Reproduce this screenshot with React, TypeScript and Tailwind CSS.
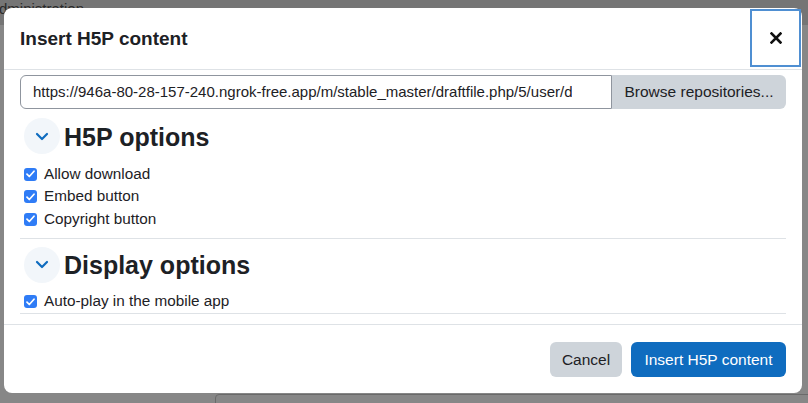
import React from "react";

const font = { fontFamily: '"Liberation Sans", Arial, sans-serif' };

function Chevron() {
  return (
    <span className="flex h-[36px] w-[36px] shrink-0 items-center justify-center rounded-full bg-[#f2f6fa]">
      <svg width="14" height="9" viewBox="0 0 14 9" fill="none">
        <path d="M2 2l5 5 5-5" stroke="#0f6cbf" strokeWidth="2.2" strokeLinecap="round" strokeLinejoin="round" />
      </svg>
    </span>
  );
}

function Check({ label }: { label: string }) {
  return (
    <label className="flex h-[22.5px] items-center gap-[7px] pl-[4px] text-[15.3px] text-[#1d2125]">
      <span className="flex h-[13px] w-[13px] items-center justify-center rounded-[3px] bg-[#2f7cf6]">
        <svg width="9" height="8" viewBox="0 0 9 8" fill="none">
          <path d="M1 4.2l2.3 2.3L8 1.2" stroke="white" strokeWidth="1.7" strokeLinecap="round" strokeLinejoin="round" />
        </svg>
      </span>
      {label}
    </label>
  );
}

function Section({ title }: { title: string }) {
  return (
    <div className="flex items-center gap-[4px] pl-[4px]">
      <Chevron />
      <h3 className="pt-[2px] text-[25px] font-bold leading-none text-[#1d2125]">{title}</h3>
    </div>
  );
}

export default function App() {
  return (
    <div className="relative h-[403px] w-[808px] overflow-hidden bg-[#878787]" style={font}>
      <div className="absolute inset-x-0 top-0 h-[25px] bg-[#757575]" />
      <div className="absolute -left-[11px] -top-[2px] text-[15px] text-[#2a2a2a]">Administration</div>
      <div className="absolute left-[215px] top-[394px] h-[30px] w-[600px] rounded-tl-[4px] border border-[#6a6a6a]" />

      <div className="relative ml-[4px] mt-[8px] flex h-[385px] w-[798px] flex-col rounded-[8px] bg-white">
        <div className="flex h-[62px] items-center justify-between border-b border-[#dee2e6] pl-[16px] pr-[1px]">
          <h5 className="pt-[2px] text-[19px] font-bold text-[#1d2125]">Insert H5P content</h5>
          <button className="mb-[1px] flex h-[58px] w-[51px] items-center justify-center border-2 border-[#4f8fd2]">
            <svg width="12" height="12" viewBox="0 0 12 12">
              <path d="M1.5 1.5l9 9M10.5 1.5l-9 9" stroke="#111" strokeWidth="2.6" strokeLinecap="square" />
            </svg>
          </button>
        </div>

        <div className="flex flex-col px-[16px] pb-[10px] pt-[5px]">
          <div className="flex h-[34px]">
            <div className="flex min-w-0 flex-1 items-center overflow-hidden whitespace-nowrap rounded-l-[6px] border border-[#8f959e] pl-[12px] text-[15px] text-[#1d2125]">
              <span className="truncate [text-overflow:clip]">
                https://946a-80-28-157-240.ngrok-free.app/m/stable_master/draftfile.php/5/user/d
              </span>
            </div>
            <button className="w-[174px] shrink-0 rounded-r-[6px] bg-[#ced4da] text-[15.5px] text-[#1d2125]">
              Browse repositories...
            </button>
          </div>

          <div className="mt-[9px]">
            <Section title="H5P options" />
          </div>
          <div className="mt-[9px] flex flex-col">
            <Check label="Allow download" />
            <Check label="Embed button" />
            <Check label="Copyright button" />
          </div>

          <div className="mt-[7px] border-t border-[#dee2e6] pt-[8px]">
            <Section title="Display options" />
          </div>
          <div className="mt-[8px] border-b border-[#dee2e6]">
            <Check label="Auto-play in the mobile app" />
          </div>
        </div>

        <div className="flex justify-end gap-[9px] border-t border-[#dee2e6] px-[16px] pt-[17px]">
          <button className="h-[35px] w-[72px] rounded-[6px] bg-[#ced4da] text-[15.5px] text-[#1d2125]">Cancel</button>
          <button className="h-[35px] w-[155px] rounded-[6px] bg-[#0f6cbf] text-[15.5px] text-white">
            Insert H5P content
          </button>
        </div>
      </div>
    </div>
  );
}
